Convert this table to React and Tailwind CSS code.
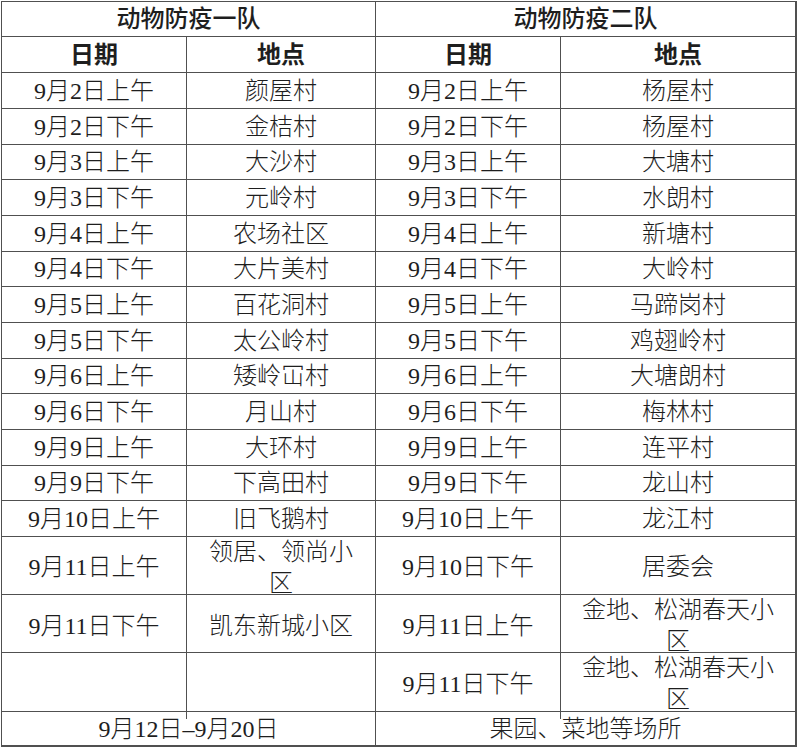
import React from "react";

const team1 = [
  ["9月2日上午", "颜屋村"],
  ["9月2日下午", "金桔村"],
  ["9月3日上午", "大沙村"],
  ["9月3日下午", "元岭村"],
  ["9月4日上午", "农场社区"],
  ["9月4日下午", "大片美村"],
  ["9月5日上午", "百花洞村"],
  ["9月5日下午", "太公岭村"],
  ["9月6日上午", "矮岭冚村"],
  ["9月6日下午", "月山村"],
  ["9月9日上午", "大环村"],
  ["9月9日下午", "下高田村"],
  ["9月10日上午", "旧飞鹅村"],
];
const team2 = [
  ["9月2日上午", "杨屋村"],
  ["9月2日下午", "杨屋村"],
  ["9月3日上午", "大塘村"],
  ["9月3日下午", "水朗村"],
  ["9月4日上午", "新塘村"],
  ["9月4日下午", "大岭村"],
  ["9月5日上午", "马蹄岗村"],
  ["9月5日下午", "鸡翅岭村"],
  ["9月6日上午", "大塘朗村"],
  ["9月6日下午", "梅林村"],
  ["9月9日上午", "连平村"],
  ["9月9日下午", "龙山村"],
  ["9月10日上午", "龙江村"],
];
const heights = ["h-[36px]", "h-[36px]", "h-[35px]", "h-[36px]", "h-[36px]", "h-[35px]", "h-[36px]", "h-[36px]", "h-[35px]", "h-[36px]", "h-[36px]", "h-[35px]", "h-[36px]"];

const cell = "flex items-center justify-center text-center border-r border-[#505050]";
const lastCell = "flex items-center justify-center text-center border-r-2 border-[#505050]";
const row = "grid grid-cols-[185px_189px_185px_236px] border-b border-[#505050]";

export default function App() {
  return (
    <div className="bg-white w-[800px] h-[750px] pt-px pl-px">
      <div
        className="w-[796px] border-t border-l border-[#505050] text-[24px] leading-none text-[#1e1e1e] font-light"
        style={{ fontFamily: '"Liberation Serif", "Noto Sans CJK SC", serif' }}
      >
        <div className={`${row} h-[35px] font-medium`}>
          <div className={`${cell} col-span-2`}>动物防疫一队</div>
          <div className={`${lastCell} col-span-2`}>动物防疫二队</div>
        </div>
        <div className={`${row} h-[36px] font-bold`}>
          <div className={cell}>日期</div>
          <div className={cell}>地点</div>
          <div className={cell}>日期</div>
          <div className={lastCell}>地点</div>
        </div>
        {team1.map((r, i) => (
          <div key={i} className={`${row} ${heights[i]}`}>
            <div className={cell}>{r[0]}</div>
            <div className={cell}>{r[1]}</div>
            <div className={cell}>{team2[i][0]}</div>
            <div className={lastCell}>{team2[i][1]}</div>
          </div>
        ))}
        <div className={`${row} h-[58px]`}>
          <div className={`${cell} pb-[4px]`}>9月11日上午</div>
          <div className={`${cell} leading-[31px] pb-[2px]`}>
            <span>领居、领尚小<br />区</span>
          </div>
          <div className={`${cell} pb-[4px]`}>9月10日下午</div>
          <div className={`${lastCell} pb-[4px]`}>居委会</div>
        </div>
        <div className={`${row} h-[58px]`}>
          <div className={`${cell} pb-[4px]`}>9月11日下午</div>
          <div className={`${cell} pb-[4px]`}>凯东新城小区</div>
          <div className={`${cell} pb-[4px]`}>9月11日上午</div>
          <div className={`${lastCell} leading-[31px] pb-[4px]`}>
            <span>金地、松湖春天小<br />区</span>
          </div>
        </div>
        <div className={`${row} h-[59px]`}>
          <div className={cell}></div>
          <div className={cell}></div>
          <div className={`${cell} pb-[4px]`}>9月11日下午</div>
          <div className={`${lastCell} leading-[31px] pb-[4px]`}>
            <span>金地、松湖春天小<br />区</span>
          </div>
        </div>
        <div className={`${row} h-[35px] border-b-2`}>
          <div className={`${cell} col-span-2`}>9月12日–9月20日</div>
          <div className={`${lastCell} col-span-2`}>果园、菜地等场所</div>
        </div>
      </div>
    </div>
  );
}
